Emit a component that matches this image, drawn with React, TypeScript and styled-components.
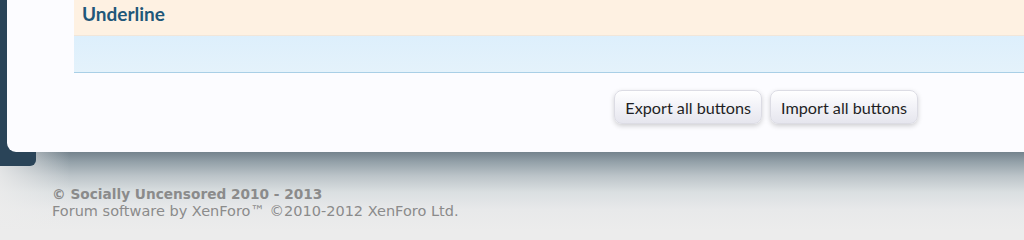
import React from 'react';
import styled, { createGlobalStyle } from 'styled-components';

const GlobalStyle = createGlobalStyle`
  html, body {
    margin: 0;
    padding: 0;
    width: 1024px;
    height: 231px;
    overflow: hidden;
  }
  body {
    background: #ececec;
  }
`;

const Page = styled.div`
  width: 1024px;
  height: 231px;
  overflow: hidden;
  background:
    linear-gradient(to right, rgba(236, 236, 236, 0.85) 0, rgba(236, 236, 236, 0) 70px),
    linear-gradient(
      to bottom,
      #ffffff 0,
      #ffffff 152px,
      #74838d 152px,
      #94a1a9 162px,
      #bcc4c9 176px,
      #dadfe1 192px,
      #e8e9ea 210px,
      #ececec 231px
    );
`;

const Shell = styled.div`
  display: grid;
  grid-template-columns: 7px 29px 1fr;
  grid-template-rows: 152px 14px;
`;

const Sidebar = styled.div`
  grid-column: 1 / 3;
  grid-row: 1 / 3;
  background: #2a4458;
  border-bottom-right-radius: 6px;
`;

const Panel = styled.div`
  grid-column: 2 / 4;
  grid-row: 1;
  z-index: 1;
  background: #fcfcff;
  border-bottom-left-radius: 9px;
  padding-left: 67px;
  display: flex;
  flex-direction: column;
`;

const Row = styled.div<{ $tone: 'peach' | 'blue' }>`
  height: ${(p) => (p.$tone === 'peach' ? '36px' : '37px')};
  box-sizing: border-box;
  padding-left: 8px;
  display: flex;
  align-items: flex-start;
  background: ${(p) =>
    p.$tone === 'peach' ? '#fef1e2' : 'linear-gradient(to bottom, #ddeffc, #e4f2fb)'};
  border-bottom: 1px solid ${(p) => (p.$tone === 'peach' ? '#f1e6da' : '#a9cfe6')};
`;

const RowTitle = styled.span`
  font-family: Lato, 'Open Sans', sans-serif;
  font-weight: 700;
  font-size: 19px;
  line-height: 28px;
  color: #1f5779;
`;

const ButtonBar = styled.div`
  display: flex;
  justify-content: flex-end;
  gap: 8px;
  padding: 17px 106px 0 0;
`;

const Button = styled.button`
  height: 34px;
  box-sizing: border-box;
  padding: 0 10px;
  border: 1px solid #dcdce4;
  border-radius: 8px;
  background: linear-gradient(to bottom, #ffffff 0%, #f3f3f8 45%, #e6e6ee 100%);
  box-shadow: 0 2px 5px rgba(0, 0, 0, 0.18);
  font-family: Lato, 'Open Sans', sans-serif;
  font-size: 16.2px;
  color: #1f1f24;
  cursor: pointer;
`;

const Footer = styled.div`
  padding: 20px 0 0 52px;
  font-family: 'DejaVu Sans', Verdana, sans-serif;
  color: #8b8b8b;
`;

const Copyright = styled.div`
  font-weight: bold;
  font-size: 13.7px;
  line-height: 16px;
`;

const Credit = styled.div`
  font-size: 14.5px;
  line-height: 18px;
`;

export default function App() {
  return (
    <Page>
      <GlobalStyle />
      <Shell>
        <Sidebar />
        <Panel>
          <Row $tone="peach">
            <RowTitle>Underline</RowTitle>
          </Row>
          <Row $tone="blue" />
          <ButtonBar>
            <Button type="button">Export all buttons</Button>
            <Button type="button">Import all buttons</Button>
          </ButtonBar>
        </Panel>
      </Shell>
      <Footer>
        <Copyright>© Socially Uncensored 2010 - 2013</Copyright>
        <Credit>Forum software by XenForo™ ©2010-2012 XenForo Ltd.</Credit>
      </Footer>
    </Page>
  );
}
